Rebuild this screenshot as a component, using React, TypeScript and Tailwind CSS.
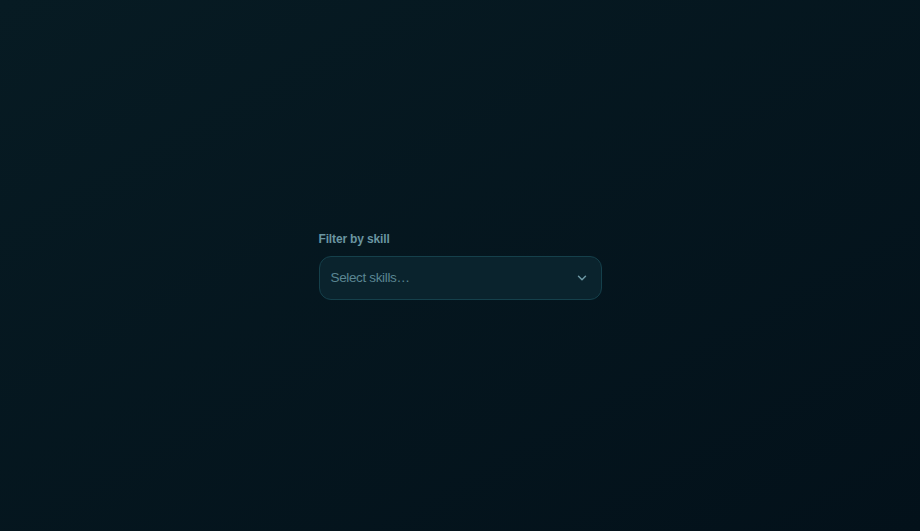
import React from 'react';

function ChevronDown() {
  return (
    <svg width="14" height="14" viewBox="0 0 24 24" fill="none" stroke="currentColor" strokeWidth="2.5" strokeLinecap="round" strokeLinejoin="round">
      <path d="M6 9l6 6 6-6" />
    </svg>
  );
}

export default function App() {
  return (
    <div
      className="min-h-screen w-full flex items-center justify-center bg-gradient-to-br from-[#071b23] to-[#03111a]"
      style={{ fontFamily: '"Liberation Sans", Arial, sans-serif' }}
    >
      <div className="w-[283px] flex flex-col gap-[9px]">
        <label className="text-[12px] font-bold tracking-[-0.15px] text-[#6a95a1] leading-4">Filter by skill</label>
        <button className="h-[44px] w-full flex items-center justify-between pl-[11px] pr-[12px] rounded-xl border border-[#15404b] bg-[#0a232d] text-left">
          <span className="text-[13.5px] tracking-[-0.35px] text-[#5a8692]">Select skills…</span>
          <span className="text-[#6d99a5]">
            <ChevronDown />
          </span>
        </button>
      </div>
    </div>
  );
}
